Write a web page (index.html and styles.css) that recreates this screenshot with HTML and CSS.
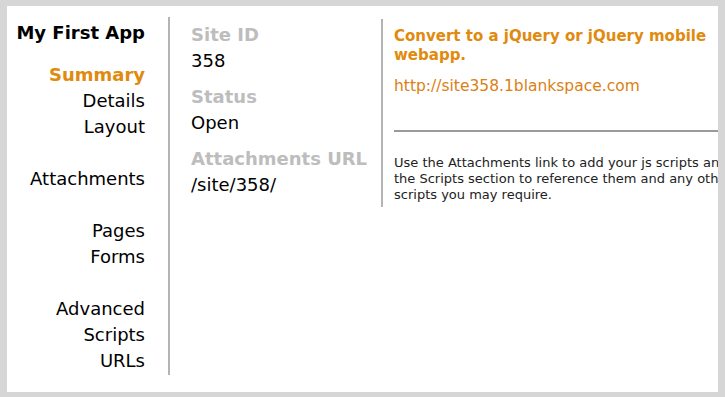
FILE: index.html
```html
<!DOCTYPE html>
<html lang="en">
<head>
    <meta charset="UTF-8">
    <title>My First App</title>
    <link rel="stylesheet" href="styles.css">
</head>
<body>
    <div class="panel">
        <div class="nav">
            <h3>My First App</h3>
            <ul>
                <li class="active">Summary</li>
                <li>Details</li>
                <li>Layout</li>
            </ul>
            <ul>
                <li>Attachments</li>
            </ul>
            <ul>
                <li>Pages</li>
                <li>Forms</li>
            </ul>
            <ul>
                <li>Advanced</li>
                <li>Scripts</li>
                <li>URLs</li>
            </ul>
        </div>
        <div class="summary">
            <div class="field">
                <div class="label">Site ID</div>
                <div class="value">358</div>
            </div>
            <div class="field">
                <div class="label">Status</div>
                <div class="value">Open</div>
            </div>
            <div class="field">
                <div class="label">Attachments URL</div>
                <div class="value">/site/358/</div>
            </div>
        </div>
        <div class="info">
            <h4>Convert to a jQuery or jQuery mobile webapp.</h4>
            <a class="site-link" href="#">http://site358.1blankspace.com</a>
            <hr>
            <p>Use the Attachments link to add your js scripts and use the Scripts section to reference them and any other scripts you may require.</p>
        </div>
    </div>
</body>
</html>
```

FILE: styles.css
```css
body {
    font-family: "DejaVu Sans", Verdana, sans-serif;
    margin: 0;
    padding: 6px 7px 5px 7px;
    background: #d6d6d6;
}
.panel {
    display: flex;
    align-items: flex-start;
    height: 386px;
    background: #fff;
    overflow: hidden;
}
.nav {
    flex-shrink: 0;
    width: 138px;
    margin-top: 11px;
    height: 358px;
    padding-right: 23px;
    border-right: 2px solid #b4b4b4;
    text-align: right;
    font-size: 18px;
}
.nav h3 {
    margin: 0 0 13px 0;
    font-size: 18px;
    line-height: 32px;
    color: #000;
}
.nav ul {
    list-style-type: none;
    margin: 0 0 26px 0;
    padding: 0;
}
.nav li {
    line-height: 26px;
    color: #000;
}
.nav li.active {
    color: #e08a0e;
    font-weight: bold;
}
.summary {
    flex-shrink: 0;
    width: 190px;
    margin-top: 13px;
    padding: 3px 0 0 21px;
    height: 185px;
    border-right: 2px solid #b4b4b4;
    font-size: 18px;
}
.field {
    margin-bottom: 10px;
}
.label {
    line-height: 26px;
    font-weight: bold;
    color: #bdbdbd;
}
.value {
    line-height: 26px;
    color: #000;
}
.info {
    flex-shrink: 0;
    width: 390px;
    margin-top: 21px;
    padding-left: 11px;
}
.info h4 {
    margin: 0;
    max-width: 330px;
    font-size: 15px;
    line-height: 19px;
    color: #e08a0e;
}
.site-link {
    display: block;
    margin-top: 12px;
    font-size: 15.5px;
    line-height: 19px;
    color: #db7f14;
    text-decoration: none;
}
.info hr {
    margin: 34px 0 0 0;
    border: none;
    border-top: 2px solid #9b9b9b;
}
.info p {
    margin: 23px 0 0 0;
    width: 375px;
    font-size: 13px;
    line-height: 16px;
    color: #222;
}
```
